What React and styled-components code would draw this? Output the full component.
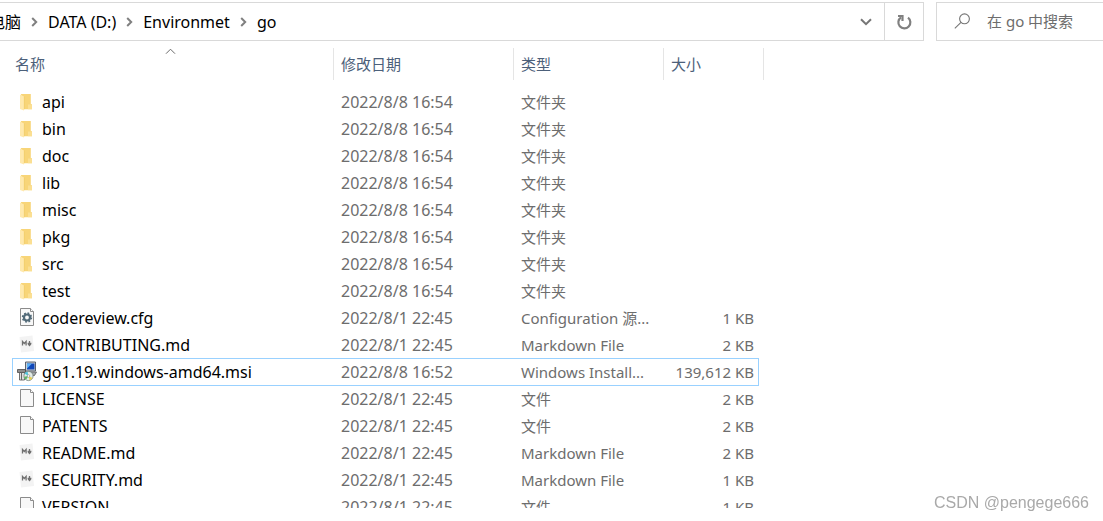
import React from 'react';
import styled, { createGlobalStyle } from 'styled-components';

const GlobalStyle = createGlobalStyle`
  * {
    box-sizing: border-box;
  }

  body {
    margin: 0;
    background: #fff;
    color: #000;
    font-family: 'Noto Sans', 'Noto Sans CJK SC', sans-serif;
    font-size: 15px;
    overflow: hidden;
  }
`;

const Explorer = styled.main`
  height: calc(100vh - 13px);
  overflow: hidden;
`;

const Toolbar = styled.header`
  display: flex;
  gap: 12px;
  padding-top: 2px;
`;

const AddressBar = styled.nav`
  flex: 1;
  display: flex;
  height: 39px;
  border: solid #d9d9d9;
  border-width: 1px 1px 1px 0;
  overflow: hidden;
`;

const Crumbs = styled.ol`
  flex: 1;
  display: flex;
  align-items: center;
  gap: 10px;
  margin: 0 0 0 -11px;
  padding: 0;
  font-size: 16px;
  line-height: 36px;
  list-style: none;
`;

const Crumb = styled.li`
  display: flex;
  align-items: center;
  gap: 10px;
  white-space: nowrap;
`;

const CrumbLink = styled.a`
  color: #000;
  text-decoration: none;
`;

const IconButton = styled.button`
  display: flex;
  align-items: center;
  justify-content: center;
  width: 36px;
  padding: 0;
  border: 0;
  background: none;
`;

const RefreshButton = styled(IconButton)`
  width: 39px;
  border-left: 1px solid #d9d9d9;
`;

const SearchBox = styled.label`
  display: flex;
  align-items: center;
  gap: 16px;
  width: 167px;
  height: 39px;
  padding: 0 0 2px 17px;
  border: solid #d9d9d9;
  border-width: 1px 0 1px 1px;
`;

const SearchInput = styled.input`
  flex: 1;
  min-width: 0;
  padding: 0;
  border: 0;
  outline: none;
  background: none;
  font: inherit;

  &::placeholder {
    color: #6d6d6d;
    opacity: 1;
  }
`;

const FileTable = styled.table`
  display: block;
  margin: 7px 0 0 12px;
`;

const Head = styled.thead`
  display: block;
`;

const Body = styled.tbody`
  display: block;
  padding-top: 9px;
`;

const HeadRow = styled.tr`
  display: grid;
  grid-template-columns: 322px 180px 150px 100px;
`;

const HeadCell = styled.th`
  position: relative;
  height: 32px;
  padding: 0 0 0 ${({ $first }) => ($first ? '3px' : '7px')};
  border-right: 1px solid #e5e5e5;
  color: #4c607a;
  font-weight: 400;
  line-height: 32px;
  text-align: left;
`;

const SortMark = styled.svg`
  position: absolute;
  top: 0;
  left: 153px;
`;

const Row = styled.tr`
  display: grid;
  grid-template-columns: 322px 180px 150px 95px;
  width: 747px;
  height: 27px;
  box-shadow: ${({ $selected }) => ($selected ? '0 -1px #99d1ff, inset 1px 0 #99d1ff, inset -1px 0 #99d1ff, inset 0 -1px #99d1ff' : 'none')};
`;

const Cell = styled.td`
  padding: 0 5px 0 7px;
  color: #6d6d6d;
  font-size: ${({ $large }) => ($large ? '16px' : '15px')};
  line-height: 27px;
  white-space: nowrap;
  text-align: ${({ $align }) => $align || 'left'};
`;

const NameCell = styled(Cell)`
  display: flex;
  align-items: center;
  gap: 5px;
  padding-left: 5px;
  color: #000;

  svg {
    margin-bottom: 3px;
    overflow: visible;
  }
`;

const Watermark = styled.div`
  position: fixed;
  right: 14px;
  bottom: 8px;
  color: #a9a9a9;
  font-family: 'Liberation Sans', Arial, sans-serif;
  font-size: 16px;
  line-height: 20px;
`;

const Chevron = () => (
  <svg width="7" height="10" viewBox="0 0 7 10" fill="none" stroke="#808080" strokeWidth="2">
    <path d="M1.2 1 5.2 5 1.2 9" />
  </svg>
);

const FolderIcon = () => (
  <svg width="20" height="20" viewBox="0 0 20 20">
    <path d="M4 3h9.8v10.2H15v5H6z" fill="#f8d578" />
    <path d="M11 13.5h4v4.7h-4z" fill="#fbdf92" />
    <path d="M3 3.4 7 5.6v14L3 18z" fill="#ffe9ad" />
    <path d="M7.3 5.6v12.6" stroke="#eec964" strokeWidth="0.6" />
  </svg>
);

const PageShape = () => (
  <>
    <path d="M3.5 1.5h10l3 3v14h-13z" fill="#f8f8f8" stroke="#8b8b8b" />
    <path d="M13.5 1.5v3h3" fill="#fff" stroke="#8b8b8b" />
  </>
);

const FileIcon = () => (
  <svg width="20" height="20" viewBox="0 0 20 20">
    <PageShape />
  </svg>
);

const ConfigIcon = () => (
  <svg width="20" height="20" viewBox="0 0 20 20">
    <PageShape />
    <circle cx="10" cy="10.5" r="3" fill="none" stroke="#526a78" strokeWidth="2.2" />
    <circle cx="10" cy="10.5" r="4.4" fill="none" stroke="#526a78" strokeWidth="1.6" strokeDasharray="1.73 1.73" />
  </svg>
);

const MarkdownIcon = () => (
  <svg width="20" height="20" viewBox="0 0 20 20">
    <path d="M2.5 3 15.5 1.5 17 17 4 18.5z" fill="#f3f3f3" />
    <path d="M5.5 11.5v-4l1.8 2 1.8-2v4M12.5 7v5M10.6 9.5h3.8M11.3 10l1.2 1.5 1.2-1.5" fill="none" stroke="#707070" strokeWidth="1.3" />
  </svg>
);

const InstallerIcon = () => (
  <svg width="20" height="20" viewBox="0 0 20 20">
    <path d="M8.5 1h10v9h-10z" fill="#c9ced4" stroke="#4b5460" strokeWidth="0.9" />
    <path d="M10 2.5h7.5v6H10z" fill="#1047b8" />
    <path d="M10 2.5h5L10 7.5z" fill="#5ab0f5" />
    <path d="M8 11h11.5l-2 3.5H9z" fill="#a3a7aa" stroke="#4d4d4d" strokeWidth="0.7" />
    <path d="M.5 8.5h8v3h-8z" fill="#8d8d8d" stroke="#4a4a4a" strokeWidth="0.8" />
    <path d="M2.5 11.5h5V19h-5z" fill="#dedede" stroke="#4e4e4e" strokeWidth="0.8" />
    <path d="M4.5 11.5V19" stroke="#666" />
    <circle cx="11.5" cy="15" r="4.6" fill="#e3ebe6" stroke="#74827f" strokeWidth="0.8" />
    <path d="M11.5 15 7.5 12.5a5 5 0 0 1 3-2z" fill="#4fc3dd" />
    <path d="m11.5 15 4 2a5 5 0 0 1-3 2.2z" fill="#e7cf54" />
    <path d="m11.5 15-2.5 3.7a5 5 0 0 1-2-3z" fill="#5cb567" />
    <circle cx="11.5" cy="15" r="1.3" fill="#fff" stroke="#777" strokeWidth="0.5" />
  </svg>
);

const icons = {
  folder: FolderIcon,
  file: FileIcon,
  config: ConfigIcon,
  markdown: MarkdownIcon,
  installer: InstallerIcon,
};

const crumbs = ['电脑', 'DATA (D:)', 'Environmet', 'go'];

const folders = ['api', 'bin', 'doc', 'lib', 'misc', 'pkg', 'src', 'test'].map((name) => ({
  name,
  icon: 'folder',
  date: '2022/8/8 16:54',
  type: '文件夹',
  size: '',
}));

const files = [
  { name: 'codereview.cfg', icon: 'config', date: '2022/8/1 22:45', type: 'Configuration 源...', size: '1 KB' },
  { name: 'CONTRIBUTING.md', icon: 'markdown', date: '2022/8/1 22:45', type: 'Markdown File', size: '2 KB' },
  { name: 'go1.19.windows-amd64.msi', icon: 'installer', date: '2022/8/8 16:52', type: 'Windows Install...', size: '139,612 KB', selected: true },
  { name: 'LICENSE', icon: 'file', date: '2022/8/1 22:45', type: '文件', size: '2 KB' },
  { name: 'PATENTS', icon: 'file', date: '2022/8/1 22:45', type: '文件', size: '2 KB' },
  { name: 'README.md', icon: 'markdown', date: '2022/8/1 22:45', type: 'Markdown File', size: '2 KB' },
  { name: 'SECURITY.md', icon: 'markdown', date: '2022/8/1 22:45', type: 'Markdown File', size: '1 KB' },
  { name: 'VERSION', icon: 'file', date: '2022/8/1 22:45', type: '文件', size: '1 KB' },
];

const FileRow = ({ file }) => {
  const Icon = icons[file.icon];
  return (
    <Row $selected={file.selected}>
      <NameCell $large>
        <Icon />
        {file.name}
      </NameCell>
      <Cell $large>{file.date}</Cell>
      <Cell>{file.type}</Cell>
      <Cell $align="right">{file.size}</Cell>
    </Row>
  );
};

const App = () => {
  return (
    <>
      <GlobalStyle />
      <Explorer>
        <Toolbar>
          <AddressBar>
            <Crumbs>
              {crumbs.map((crumb, index) => (
                <Crumb key={crumb}>
                  {index > 0 && <Chevron />}
                  <CrumbLink href="#">{crumb}</CrumbLink>
                </Crumb>
              ))}
            </Crumbs>
            <IconButton type="button" aria-label="History">
              <svg width="12" height="8" viewBox="0 0 12 8" fill="none" stroke="#767676" strokeWidth="2">
                <path d="M1 1.2 6 6.2 11 1.2" />
              </svg>
            </IconButton>
            <RefreshButton type="button" aria-label="Refresh">
              <svg width="16" height="16" viewBox="0 0 16 16" fill="none" stroke="#808080" strokeWidth="2.2">
                <path d="M12 3.6A6 6 0 1 1 5 3.4" />
                <path d="M2 2h4.5v5" />
              </svg>
            </RefreshButton>
          </AddressBar>
          <SearchBox>
            <svg width="17" height="16" viewBox="0 0 17 16" fill="none" stroke="#767676" strokeWidth="1.1">
              <circle cx="10.5" cy="5.8" r="4.9" />
              <path d="M7 9.3.8 15.4" />
            </svg>
            <SearchInput type="text" aria-label="Search" placeholder="在 go 中搜索" />
          </SearchBox>
        </Toolbar>
        <FileTable>
          <Head>
            <HeadRow>
              <HeadCell $first>
                名称
                <SortMark width="11" height="7" viewBox="0 0 11 7" fill="none" stroke="#6a6a6a">
                  <path d="M1 5.7 5.5 1.2 10 5.7" />
                </SortMark>
              </HeadCell>
              <HeadCell>修改日期</HeadCell>
              <HeadCell>类型</HeadCell>
              <HeadCell>大小</HeadCell>
            </HeadRow>
          </Head>
          <Body>
            {[...folders, ...files].map((file) => (
              <FileRow key={file.name} file={file} />
            ))}
          </Body>
        </FileTable>
      </Explorer>
      <Watermark>CSDN @pengege666</Watermark>
    </>
  );
};

export default App;
